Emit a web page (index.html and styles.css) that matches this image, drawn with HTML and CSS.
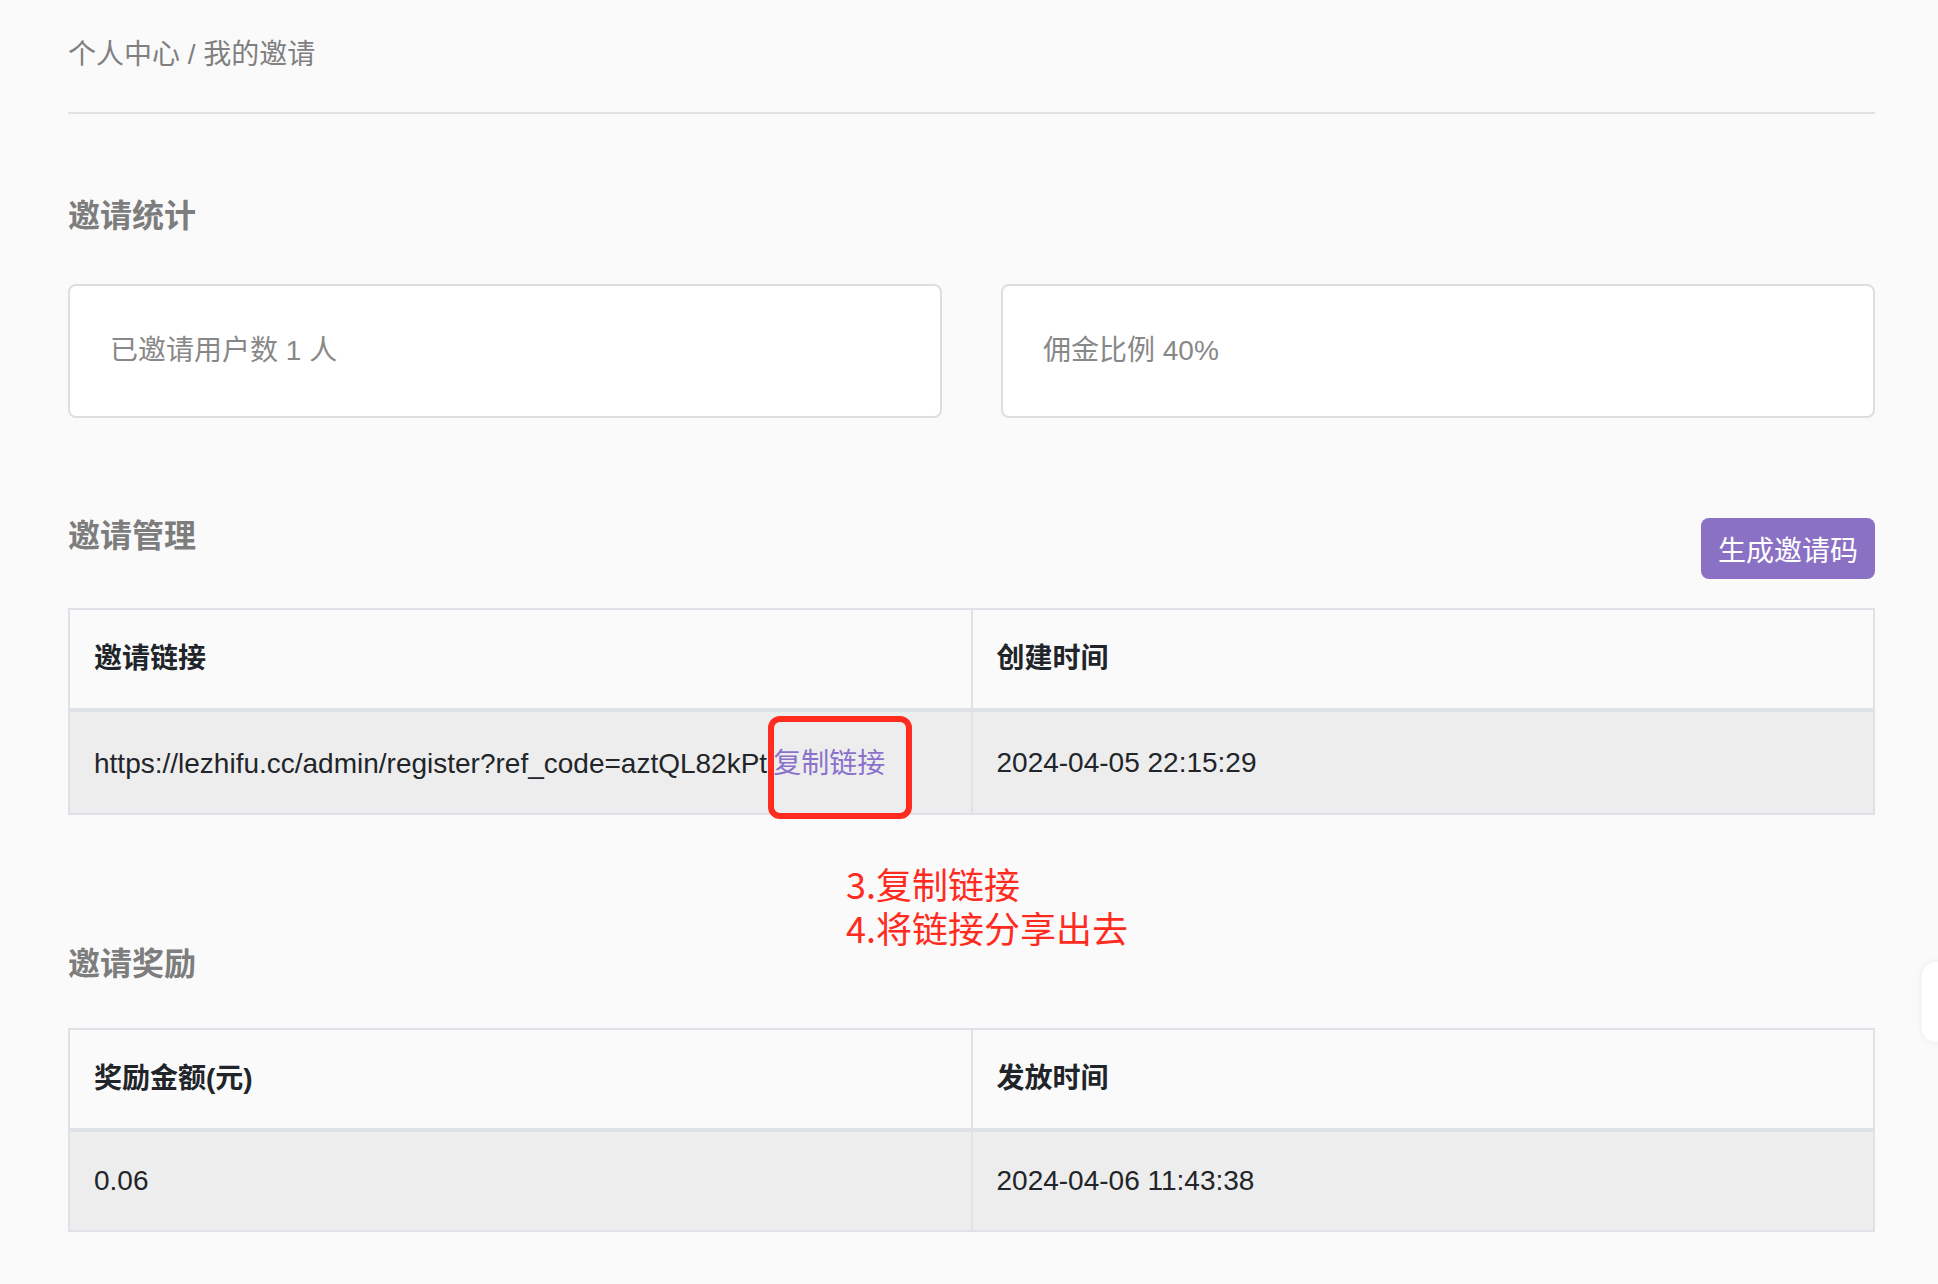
FILE: index.html
```html
<!DOCTYPE html>
<html lang="zh-CN">
<head>
    <meta charset="UTF-8">
    <meta name="viewport" content="width=device-width, initial-scale=1.0">
    <title>我的邀请</title>
    <link rel="stylesheet" href="styles.css">
</head>
<body>
    <div class="page">
        <div class="breadcrumb">个人中心 / 我的邀请</div>
        <hr class="divider">

        <h2 class="section-title first">邀请统计</h2>
        <div class="stats">
            <div class="stat-card">已邀请用户数 1 人</div>
            <div class="stat-card">佣金比例 40%</div>
        </div>

        <div class="section-head">
            <h2 class="section-title">邀请管理</h2>
            <button class="btn-primary">生成邀请码</button>
        </div>
        <table class="data-table">
            <thead>
                <tr>
                    <th>邀请链接</th>
                    <th>创建时间</th>
                </tr>
            </thead>
            <tbody>
                <tr>
                    <td><span class="ref-url">https://lezhifu.cc/admin/register?ref_code=aztQL82kPt</span><a class="copy-link" href="#">复制链接</a></td>
                    <td>2024-04-05 22:15:29</td>
                </tr>
            </tbody>
        </table>

        <h2 class="section-title reward">邀请奖励</h2>
        <table class="data-table">
            <thead>
                <tr>
                    <th>奖励金额(元)</th>
                    <th>发放时间</th>
                </tr>
            </thead>
            <tbody>
                <tr>
                    <td>0.06</td>
                    <td>2024-04-06 11:43:38</td>
                </tr>
            </tbody>
        </table>

        <!-- 标注 -->
        <div class="mark-box"></div>
        <div class="mark-note">3.复制链接<br>4.将链接分享出去</div>
    </div>

    <div class="side-tab"></div>
</body>
</html>
```

FILE: styles.css
```css
body {
    margin: 0;
    background: #fafafa;
    font-family: "Liberation Sans", "Noto Sans CJK SC", sans-serif;
    color: #212529;
}

.page {
    position: relative;
    padding: 35px 63px 60px 68px;
}

.breadcrumb {
    font-size: 28px;
    line-height: 40px;
    color: #808080;
}

.divider {
    margin: 37px 0 0 0;
    border: none;
    border-top: 2px solid #e2e2e2;
}

.section-title {
    margin: 0;
    font-size: 32px;
    line-height: 44px;
    font-weight: bold;
    color: #7d7d7d;
}

.section-title.first {
    margin-top: 80px;
}

.stats {
    display: grid;
    grid-template-columns: 1fr 1fr;
    gap: 59px;
    margin-top: 46px;
}

.stat-card {
    background: #fff;
    border: 2px solid #dedede;
    border-radius: 8px;
    padding: 45px 40px;
    font-size: 28px;
    line-height: 40px;
    color: #888;
}

.section-head {
    display: flex;
    justify-content: space-between;
    align-items: flex-start;
    margin-top: 96px;
}

.btn-primary {
    margin-top: 4px;
    height: 61px;
    padding: 0 17px;
    font-family: "Noto Sans CJK SC", sans-serif;
    font-size: 28px;
    color: #fff;
    background: #8b71c4;
    border: none;
    border-radius: 8px;
}

.data-table {
    width: 100%;
    margin-top: 29px;
    border-collapse: collapse;
    table-layout: fixed;
    font-size: 28px;
}

.data-table th,
.data-table td {
    border: 2px solid #dee2e6;
    padding: 28px 24px;
    line-height: 42px;
    text-align: left;
    white-space: nowrap;
}

.data-table th {
    font-weight: bold;
    border-bottom-width: 4px;
}

.data-table tbody tr {
    background: #ededed;
}

.copy-link {
    margin-left: 6px;
    color: #8a72cc;
    text-decoration: none;
    font-family: "Noto Sans CJK SC", sans-serif;
}

.section-title.reward {
    margin-top: 127px;
}

.reward + .data-table {
    margin-top: 42px;
}

.mark-box {
    position: absolute;
    left: 768px;
    top: 716px;
    width: 132px;
    height: 91px;
    border: 6px solid #ff2b1f;
    border-radius: 12px;
}

.mark-note {
    position: absolute;
    left: 846px;
    top: 861px;
    font-family: "Noto Sans CJK SC", sans-serif;
    font-size: 36px;
    line-height: 44px;
    color: #ff2b1f;
}

.side-tab {
    position: fixed;
    left: 1922px;
    top: 962px;
    width: 40px;
    height: 80px;
    background: #fff;
    border-radius: 14px;
    box-shadow: 0 0 8px rgba(0, 0, 0, 0.06);
}
```
